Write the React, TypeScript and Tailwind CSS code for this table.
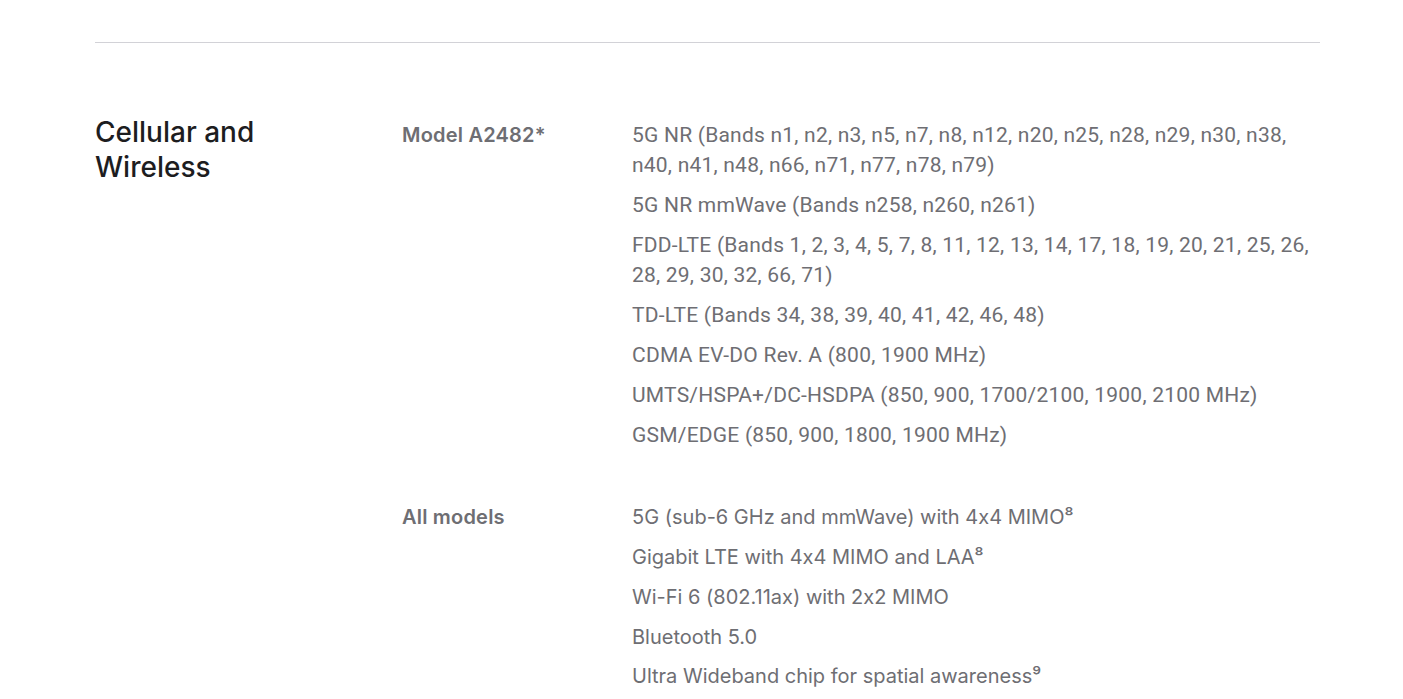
import React from "react";

const groups: { label: string; items: string[]; condensed?: boolean }[] = [
  {
    label: "Model A2482*",
    condensed: true,
    items: [
      "5G NR (Bands n1, n2, n3, n5, n7, n8, n12, n20, n25, n28, n29, n30, n38, n40, n41, n48, n66, n71, n77, n78, n79)",
      "5G NR mmWave (Bands n258, n260, n261)",
      "FDD-LTE (Bands 1, 2, 3, 4, 5, 7, 8, 11, 12, 13, 14, 17, 18, 19, 20, 21, 25, 26, 28, 29, 30, 32, 66, 71)",
      "TD-LTE (Bands 34, 38, 39, 40, 41, 42, 46, 48)",
      "CDMA EV-DO Rev. A (800, 1900 MHz)",
      "UMTS/HSPA+/DC-HSDPA (850, 900, 1700/2100, 1900, 2100 MHz)",
      "GSM/EDGE (850, 900, 1800, 1900 MHz)",
    ],
  },
  {
    label: "All models",
    items: [
      "5G (sub-6 GHz and mmWave) with 4x4 MIMO⁸",
      "Gigabit LTE with 4x4 MIMO and LAA⁸",
      "Wi-Fi 6 (802.11ax) with 2x2 MIMO",
      "Bluetooth 5.0",
      "Ultra Wideband chip for spatial awareness⁹",
    ],
  },
];

export default function App() {
  return (
    <div className="min-h-[699px] bg-white pl-[95px] pt-[42px] font-['Inter',sans-serif] [font-feature-settings:'calt'_0] overflow-hidden">
      <div className="w-[1225px]">
        <div className="border-t border-[#d2d2d7]" />
        <div className="flex pt-[72px]">
          <h2 className="w-[307px] shrink-0 text-[28px] leading-[35px] font-medium text-[#1d1d1f]">
            Cellular and
            <br />
            Wireless
          </h2>
          <div className="flex flex-col gap-[52px] flex-1 pt-[5px]">
            {groups.map((g) => (
              <div key={g.label} className="flex">
                <div className="w-[230px] shrink-0 text-[20px] leading-[30px] font-semibold text-[#6e6e73] tracking-[0.2px]">
                  {g.label}
                </div>
                <ul className="flex flex-col gap-[10px] flex-1">
                  {g.items.map((it, i) => (
                    <li
                      key={i}
                      className={
                        g.condensed
                          ? "text-[21px] leading-[30px] text-[#6e6e73] font-['Roboto',sans-serif] tracking-[0.22px]"
                          : "text-[20px] leading-[30px] text-[#6e6e73] last:leading-[29px]"
                      }
                    >
                      {it}
                    </li>
                  ))}
                </ul>
              </div>
            ))}
          </div>
        </div>
      </div>
    </div>
  );
}
